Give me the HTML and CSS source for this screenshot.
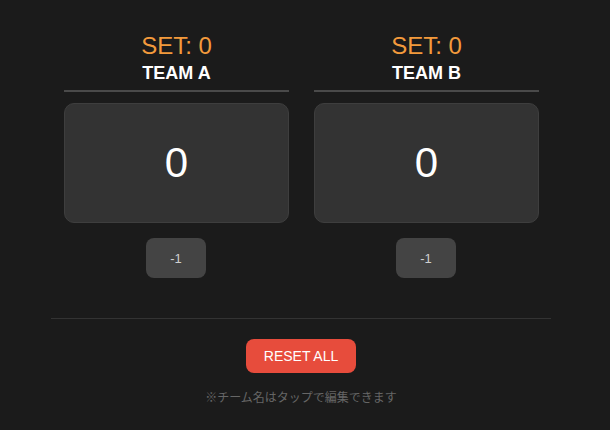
FILE: index.html
```html
<!DOCTYPE html>
<html lang="ja">
<head>
<meta charset="utf-8">
<link rel="stylesheet" href="styles.css">
</head>
<body>
<div class="app">
  <div class="teams">
    <div class="team">
      <div class="sets">SET: 0</div>
      <div class="name">TEAM A</div>
      <div class="score">0</div>
      <button class="minus">-1</button>
    </div>
    <div class="team">
      <div class="sets">SET: 0</div>
      <div class="name">TEAM B</div>
      <div class="score">0</div>
      <button class="minus">-1</button>
    </div>
  </div>
  <div class="footer">
    <button class="reset">RESET ALL</button>
    <div class="note">※チーム名はタップで編集できます</div>
  </div>
</div>
</body>
</html>
```
FILE: styles.css
```css
html, body {
  margin: 0;
  padding: 0;
  background: #1b1b1b;
  font-family: "Liberation Sans", Arial, "Noto Sans CJK JP", sans-serif;
}
.app {
  width: 500px;
  margin-left: 51px;
  padding-top: 32px;
}
.teams {
  display: grid;
  grid-template-columns: 225px 225px;
  column-gap: 25px;
  padding-left: 13px;
  padding-bottom: 40px;
  border-bottom: 1px solid #333;
}
.team {
  display: flex;
  flex-direction: column;
  align-items: center;
}
.sets {
  color: #f39a3c;
  font-size: 24px;
  line-height: 28px;
}
.name {
  align-self: stretch;
  text-align: center;
  color: #ffffff;
  font-weight: bold;
  font-size: 18px;
  line-height: 22px;
  padding-top: 2px;
  padding-bottom: 6px;
  border-bottom: 2px solid #4a4a4a;
  margin-bottom: 11px;
}
.score {
  align-self: stretch;
  box-sizing: border-box;
  height: 120px;
  background: #333333;
  border: 1px solid #3e3e3e;
  border-radius: 10px;
  display: flex;
  align-items: center;
  justify-content: center;
  color: #ffffff;
  font-size: 42px;
}
.minus {
  margin-top: 15px;
  margin-right: 1px;
  width: 60px;
  height: 40px;
  border: none;
  border-radius: 8px;
  background: #444444;
  color: #cfcfcf;
  font-family: inherit;
  font-size: 13px;
}
.footer {
  display: flex;
  flex-direction: column;
  align-items: center;
  padding-top: 20px;
}
.reset {
  width: 110px;
  height: 34px;
  border: none;
  border-radius: 8px;
  background: #e74c3c;
  color: #ffffff;
  font-family: inherit;
  font-size: 14px;
}
.note {
  margin-top: 15px;
  color: #666666;
  font-size: 12px;
}
```
